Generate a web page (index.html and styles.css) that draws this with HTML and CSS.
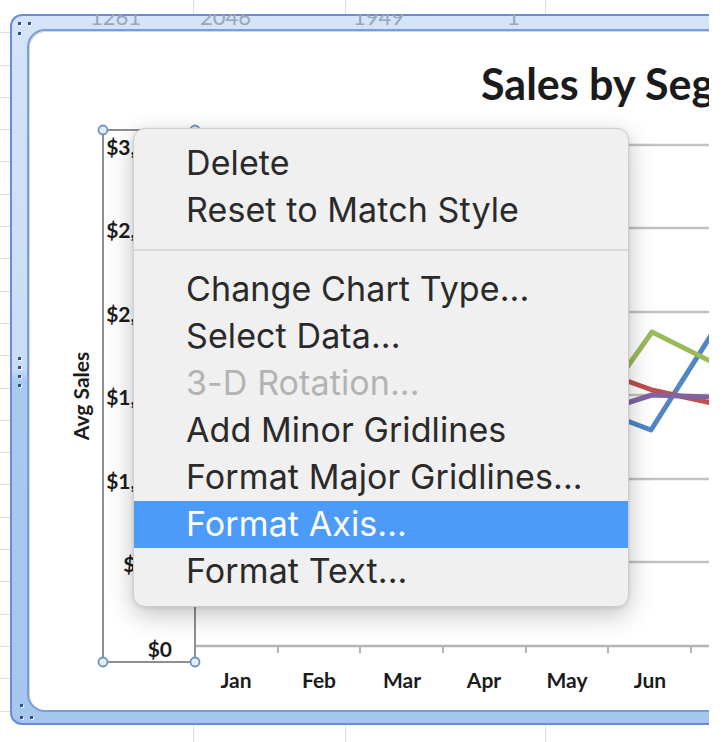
FILE: index.html
```
<!DOCTYPE html>
<html>
<head>
<meta charset="utf-8">
<link rel="stylesheet" href="styles.css">
</head>
<body>
<div class="viewport">
  <div class="frame">
    <div class="band-top">
      <span class="cell">1261</span>
      <span class="cell">2046</span>
      <span class="cell">1949</span>
      <span class="cell">1</span>
    </div>
    <div class="inner">
      <svg class="chart" width="722" height="679" viewBox="29 31 722 679">
        <text class="title" x="481" y="100">Sales by Seg</text>
        <g class="grid">
          <line x1="197" y1="145" x2="760" y2="145"/>
          <line x1="197" y1="228" x2="760" y2="228"/>
          <line x1="197" y1="312" x2="760" y2="312"/>
          <line x1="197" y1="395" x2="760" y2="395"/>
          <line x1="197" y1="479" x2="760" y2="479"/>
          <line x1="197" y1="562" x2="760" y2="562"/>
        </g>
        <line class="xaxis" x1="195" y1="646" x2="760" y2="646"/>
        <g class="ticks">
          <line x1="278" y1="646" x2="278" y2="653"/>
          <line x1="360" y1="646" x2="360" y2="653"/>
          <line x1="443" y1="646" x2="443" y2="653"/>
          <line x1="526" y1="646" x2="526" y2="653"/>
          <line x1="608" y1="646" x2="608" y2="653"/>
          <line x1="691" y1="646" x2="691" y2="653"/>
        </g>
        <polyline class="s-blue" points="567,398 651,430 734,299"/>
        <polyline class="s-red" points="567,359 652,390 734,408"/>
        <polyline class="s-green" points="567,452 652,332 734,373"/>
        <polyline class="s-purple" points="567,422 652,395 734,398"/>
        <rect class="sel" x="103" y="130" width="92" height="532"/>
        <g class="ylab">
          <text x="172" y="155">$3,000</text>
          <text x="172" y="238">$2,500</text>
          <text x="172" y="322">$2,000</text>
          <text x="172" y="405">$1,500</text>
          <text x="172" y="489">$1,000</text>
          <text x="172" y="572">$500</text>
          <text x="172" y="657">$0</text>
        </g>
        <g class="xlab">
          <text x="236" y="688">Jan</text>
          <text x="319" y="688">Feb</text>
          <text x="402" y="688">Mar</text>
          <text x="484" y="688">Apr</text>
          <text x="567" y="688">May</text>
          <text x="650" y="688">Jun</text>
        </g>
        <text class="axis-title" transform="translate(89,396) rotate(-90)">Avg Sales</text>
        <g class="handles">
          <circle cx="103" cy="130" r="4.5"/>
          <circle cx="195" cy="130" r="4.5"/>
          <circle cx="103" cy="662" r="4.5"/>
          <circle cx="195" cy="662" r="4.5"/>
        </g>
      </svg>
    </div>
    <span class="dot d1"></span>
    <span class="dot d2"></span>
    <span class="dot d3"></span>
    <span class="dot d4"></span>
    <span class="dot d5"></span>
    <span class="dot d6"></span>
    <span class="dot d7"></span>
    <span class="dot d8"></span>
    <span class="dot d9"></span>
    <span class="dot d10"></span>
  </div>

  <div class="menu">
    <div class="item">Delete</div>
    <div class="item">Reset to Match Style</div>
    <div class="sep"></div>
    <div class="item">Change Chart Type...</div>
    <div class="item">Select Data...</div>
    <div class="item disabled">3-D Rotation...</div>
    <div class="item">Add Minor Gridlines</div>
    <div class="item">Format Major Gridlines...</div>
    <div class="item active">Format Axis...</div>
    <div class="item">Format Text...</div>
  </div>
</div>
</body>
</html>
```

FILE: styles.css
```
* { box-sizing: border-box; }

html, body {
  margin: 0;
  padding: 0;
  background: #ffffff;
}

.viewport {
  position: relative;
  width: 709px;
  height: 742px;
  overflow: hidden;
  padding-top: 14px;
  background-color: #ffffff;
  background-image:
    linear-gradient(#dedede, #dedede),
    linear-gradient(#dedede, #dedede),
    linear-gradient(#dedede, #dedede),
    repeating-linear-gradient(to bottom, transparent 0, transparent 31.3px, #dedede 31.3px, #dedede 32.3px);
  background-size: 1px 100%, 1px 100%, 1px 100%, 100% 100%;
  background-position: 193px 0, 345px 0, 545px 0, 0 1px;
  background-repeat: no-repeat;
}

.frame {
  position: relative;
  margin-left: 10px;
  width: 760px;
  height: 711px;
  border: 2px solid #6a8cd8;
  border-radius: 12px;
  padding: 0 15px 11px 15px;
  background: linear-gradient(to bottom, #d4e4f9 0%, #cadcf6 50%, #a9caef 51.5%, #a5c7ee 100%);
  display: flex;
  flex-direction: column;
}

.band-top {
  height: 15px;
  margin-top: -2px;
  overflow: hidden;
  display: flex;
  align-items: flex-start;
}

.cell {
  font-family: Lato, "Liberation Sans", sans-serif;
  font-size: 22px;
  line-height: 22px;
  color: #97a6bc;
  margin-top: -8px;
  flex: none;
}
.cell:nth-child(1) { margin-left: 63px; width: 110px; }
.cell:nth-child(2) { width: 153px; }
.cell:nth-child(3) { width: 154px; }
.cell:nth-child(4) { width: 40px; }

.inner {
  flex: 1;
  border: 2px solid #7a9de0;
  border-radius: 18px;
  background: #ffffff;
  overflow: hidden;
  box-shadow: inset 1px 1px 0 #d7d7d7;
}

.chart {
  display: block;
}

.chart text {
  font-family: Lato, "Liberation Sans", sans-serif;
  font-weight: 700;
  fill: #1b1b1b;
}

.chart .title {
  font-size: 43px;
}

.ylab text {
  font-size: 21px;
  text-anchor: end;
}

.xlab text {
  font-size: 21px;
  text-anchor: middle;
}

.chart .axis-title {
  font-size: 21px;
  text-anchor: middle;
}

.grid line {
  stroke: #c2c2c2;
  stroke-width: 2.5;
}

.xaxis {
  stroke: #b4b4b4;
  stroke-width: 2.5;
}

.ticks line {
  stroke: #b4b4b4;
  stroke-width: 2;
}

.s-blue, .s-red, .s-green, .s-purple {
  fill: none;
  stroke-width: 5;
  stroke-linejoin: round;
}
.s-blue { stroke: #4f86c6; }
.s-red { stroke: #c0504d; }
.s-green { stroke: #9bbb59; }
.s-purple { stroke: #8064a2; }

.sel {
  fill: none;
  stroke: #8f8f8f;
  stroke-width: 2;
}

.handles circle {
  fill: #e4ecf6;
  stroke: #6b93c2;
  stroke-width: 1.8;
}

.dot {
  position: absolute;
  width: 3px;
  height: 3px;
  background: #2f4f8e;
  box-shadow: 1px 1px 0 #ffffff;
}
.d1 { left: 6px; top: 6px; }
.d2 { left: 16px; top: 6px; }
.d3 { left: 6px; top: 16px; }
.d4 { left: 8px; top: 688px; }
.d5 { left: 8px; top: 700px; }
.d6 { left: 18px; top: 700px; }
.d7 { left: 6px; top: 341px; }
.d8 { left: 6px; top: 350px; }
.d9 { left: 6px; top: 359px; }
.d10 { left: 6px; top: 368px; }

.menu {
  position: absolute;
  left: 133px;
  top: 128px;
  width: 496px;
  padding: 11px 0 11px;
  background: #f0f0f0;
  border: 1px solid #cdcdcd;
  border-radius: 12px;
  box-shadow: 0 8px 26px rgba(0, 0, 0, 0.24), 0 1px 4px rgba(0, 0, 0, 0.10);
  font-family: Inter, "Liberation Sans", sans-serif;
  font-size: 34px;
  letter-spacing: 0.1px;
  color: #2a2a2a;
}

.item {
  height: 47px;
  line-height: 45px;
  padding-left: 52px;
  white-space: nowrap;
}

.item.disabled {
  color: #b3b3b3;
}

.item.active {
  background: #4c9bf8;
  color: #ffffff;
}

.sep {
  height: 2px;
  margin: 15px 0;
  background: #d9d9d9;
}
```
